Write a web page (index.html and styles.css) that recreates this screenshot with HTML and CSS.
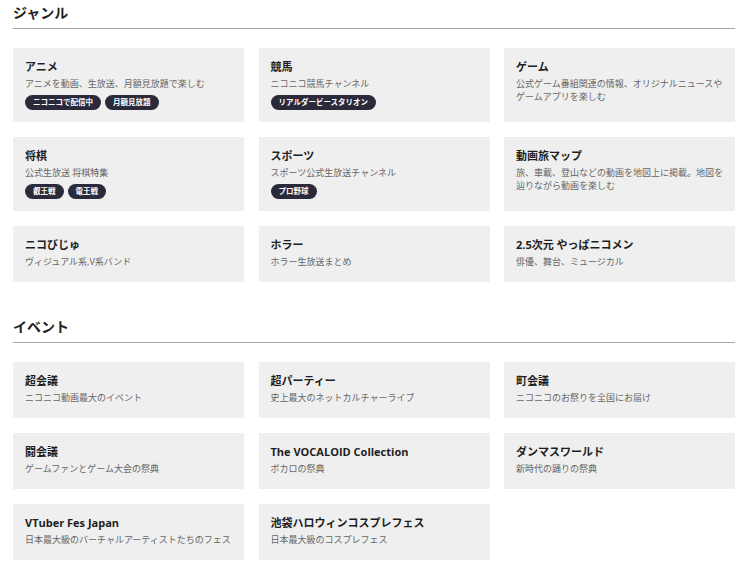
FILE: index.html
```html
<!DOCTYPE html>
<html lang="ja">
<head>
    <meta charset="UTF-8">
    <meta name="viewport" content="width=device-width, initial-scale=1.0">
    <title>ジャンル・イベント</title>
    <link rel="stylesheet" href="styles.css">
</head>
<body>
    <div class="page">
        <section class="block">
            <h2 class="block-title">ジャンル</h2>
            <div class="grid">
                <a class="card" href="#">
                    <div class="card-title">アニメ</div>
                    <div class="card-desc">アニメを動画、生放送、月額見放題で楽しむ</div>
                    <div class="tags">
                        <span class="tag">ニコニコで配信中</span>
                        <span class="tag">月額見放題</span>
                    </div>
                </a>
                <a class="card" href="#">
                    <div class="card-title">競馬</div>
                    <div class="card-desc">ニコニコ競馬チャンネル</div>
                    <div class="tags">
                        <span class="tag">リアルダービースタリオン</span>
                    </div>
                </a>
                <a class="card" href="#">
                    <div class="card-title">ゲーム</div>
                    <div class="card-desc">公式ゲーム番組関連の情報、オリジナルニュースやゲームアプリを楽しむ</div>
                </a>
                <a class="card" href="#">
                    <div class="card-title">将棋</div>
                    <div class="card-desc">公式生放送 将棋特集</div>
                    <div class="tags">
                        <span class="tag">叡王戦</span>
                        <span class="tag">電王戦</span>
                    </div>
                </a>
                <a class="card" href="#">
                    <div class="card-title">スポーツ</div>
                    <div class="card-desc">スポーツ公式生放送チャンネル</div>
                    <div class="tags">
                        <span class="tag">プロ野球</span>
                    </div>
                </a>
                <a class="card" href="#">
                    <div class="card-title">動画旅マップ</div>
                    <div class="card-desc">旅、車載、登山などの動画を地図上に掲載。地図を辿りながら動画を楽しむ</div>
                </a>
                <a class="card" href="#">
                    <div class="card-title">ニコびじゅ</div>
                    <div class="card-desc">ヴィジュアル系,V系バンド</div>
                </a>
                <a class="card" href="#">
                    <div class="card-title">ホラー</div>
                    <div class="card-desc">ホラー生放送まとめ</div>
                </a>
                <a class="card" href="#">
                    <div class="card-title">2.5次元 やっぱニコメン</div>
                    <div class="card-desc">俳優、舞台、ミュージカル</div>
                </a>
            </div>
        </section>

        <section class="block">
            <h2 class="block-title">イベント</h2>
            <div class="grid">
                <a class="card" href="#">
                    <div class="card-title">超会議</div>
                    <div class="card-desc">ニコニコ動画最大のイベント</div>
                </a>
                <a class="card" href="#">
                    <div class="card-title">超パーティー</div>
                    <div class="card-desc">史上最大のネットカルチャーライブ</div>
                </a>
                <a class="card" href="#">
                    <div class="card-title">町会議</div>
                    <div class="card-desc">ニコニコのお祭りを全国にお届け</div>
                </a>
                <a class="card" href="#">
                    <div class="card-title">闘会議</div>
                    <div class="card-desc">ゲームファンとゲーム大会の祭典</div>
                </a>
                <a class="card" href="#">
                    <div class="card-title">The VOCALOID Collection</div>
                    <div class="card-desc">ボカロの祭典</div>
                </a>
                <a class="card" href="#">
                    <div class="card-title">ダンマスワールド</div>
                    <div class="card-desc">新時代の踊りの祭典</div>
                </a>
                <a class="card" href="#">
                    <div class="card-title">VTuber Fes Japan</div>
                    <div class="card-desc">日本最大級のバーチャルアーティストたちのフェス</div>
                </a>
                <a class="card" href="#">
                    <div class="card-title">池袋ハロウィンコスプレフェス</div>
                    <div class="card-desc">日本最大級のコスプレフェス</div>
                </a>
            </div>
        </section>
    </div>
</body>
</html>
```

FILE: styles.css
```css
body {
    margin: 0;
    background-color: #fff;
    font-family: 'Open Sans', 'Noto Sans CJK JP', sans-serif;
    color: #222;
}
.page {
    width: 722px;
    margin-left: 13px;
    padding-top: 3px;
}
.block {
    margin-bottom: 35px;
}
.block-title {
    margin: 0 0 19px;
    padding-bottom: 5px;
    font-size: 14px;
    line-height: 20px;
    font-weight: bold;
    color: #222;
    border-bottom: 1px solid #a8a8a8;
}
.grid {
    display: grid;
    grid-template-columns: repeat(3, 1fr);
    column-gap: 14.5px;
    row-gap: 15px;
}
.card {
    display: block;
    padding: 12px 12px 14px;
    background-color: #efefef;
    text-decoration: none;
    color: inherit;
}
.card-title {
    font-size: 11px;
    line-height: 14px;
    font-weight: bold;
    color: #1e1e1e;
}
.card-desc {
    margin-top: 3px;
    font-size: 9px;
    line-height: 13px;
    color: #666;
}
.tags {
    display: flex;
    gap: 4px;
    margin: 5px 0 -2px;
}
.tag {
    display: inline-block;
    height: 15px;
    padding: 0 8px;
    border-radius: 8px;
    background-color: #2b2a3b;
    color: #fff;
    font-size: 7.5px;
    line-height: 15px;
    font-weight: bold;
}
```
